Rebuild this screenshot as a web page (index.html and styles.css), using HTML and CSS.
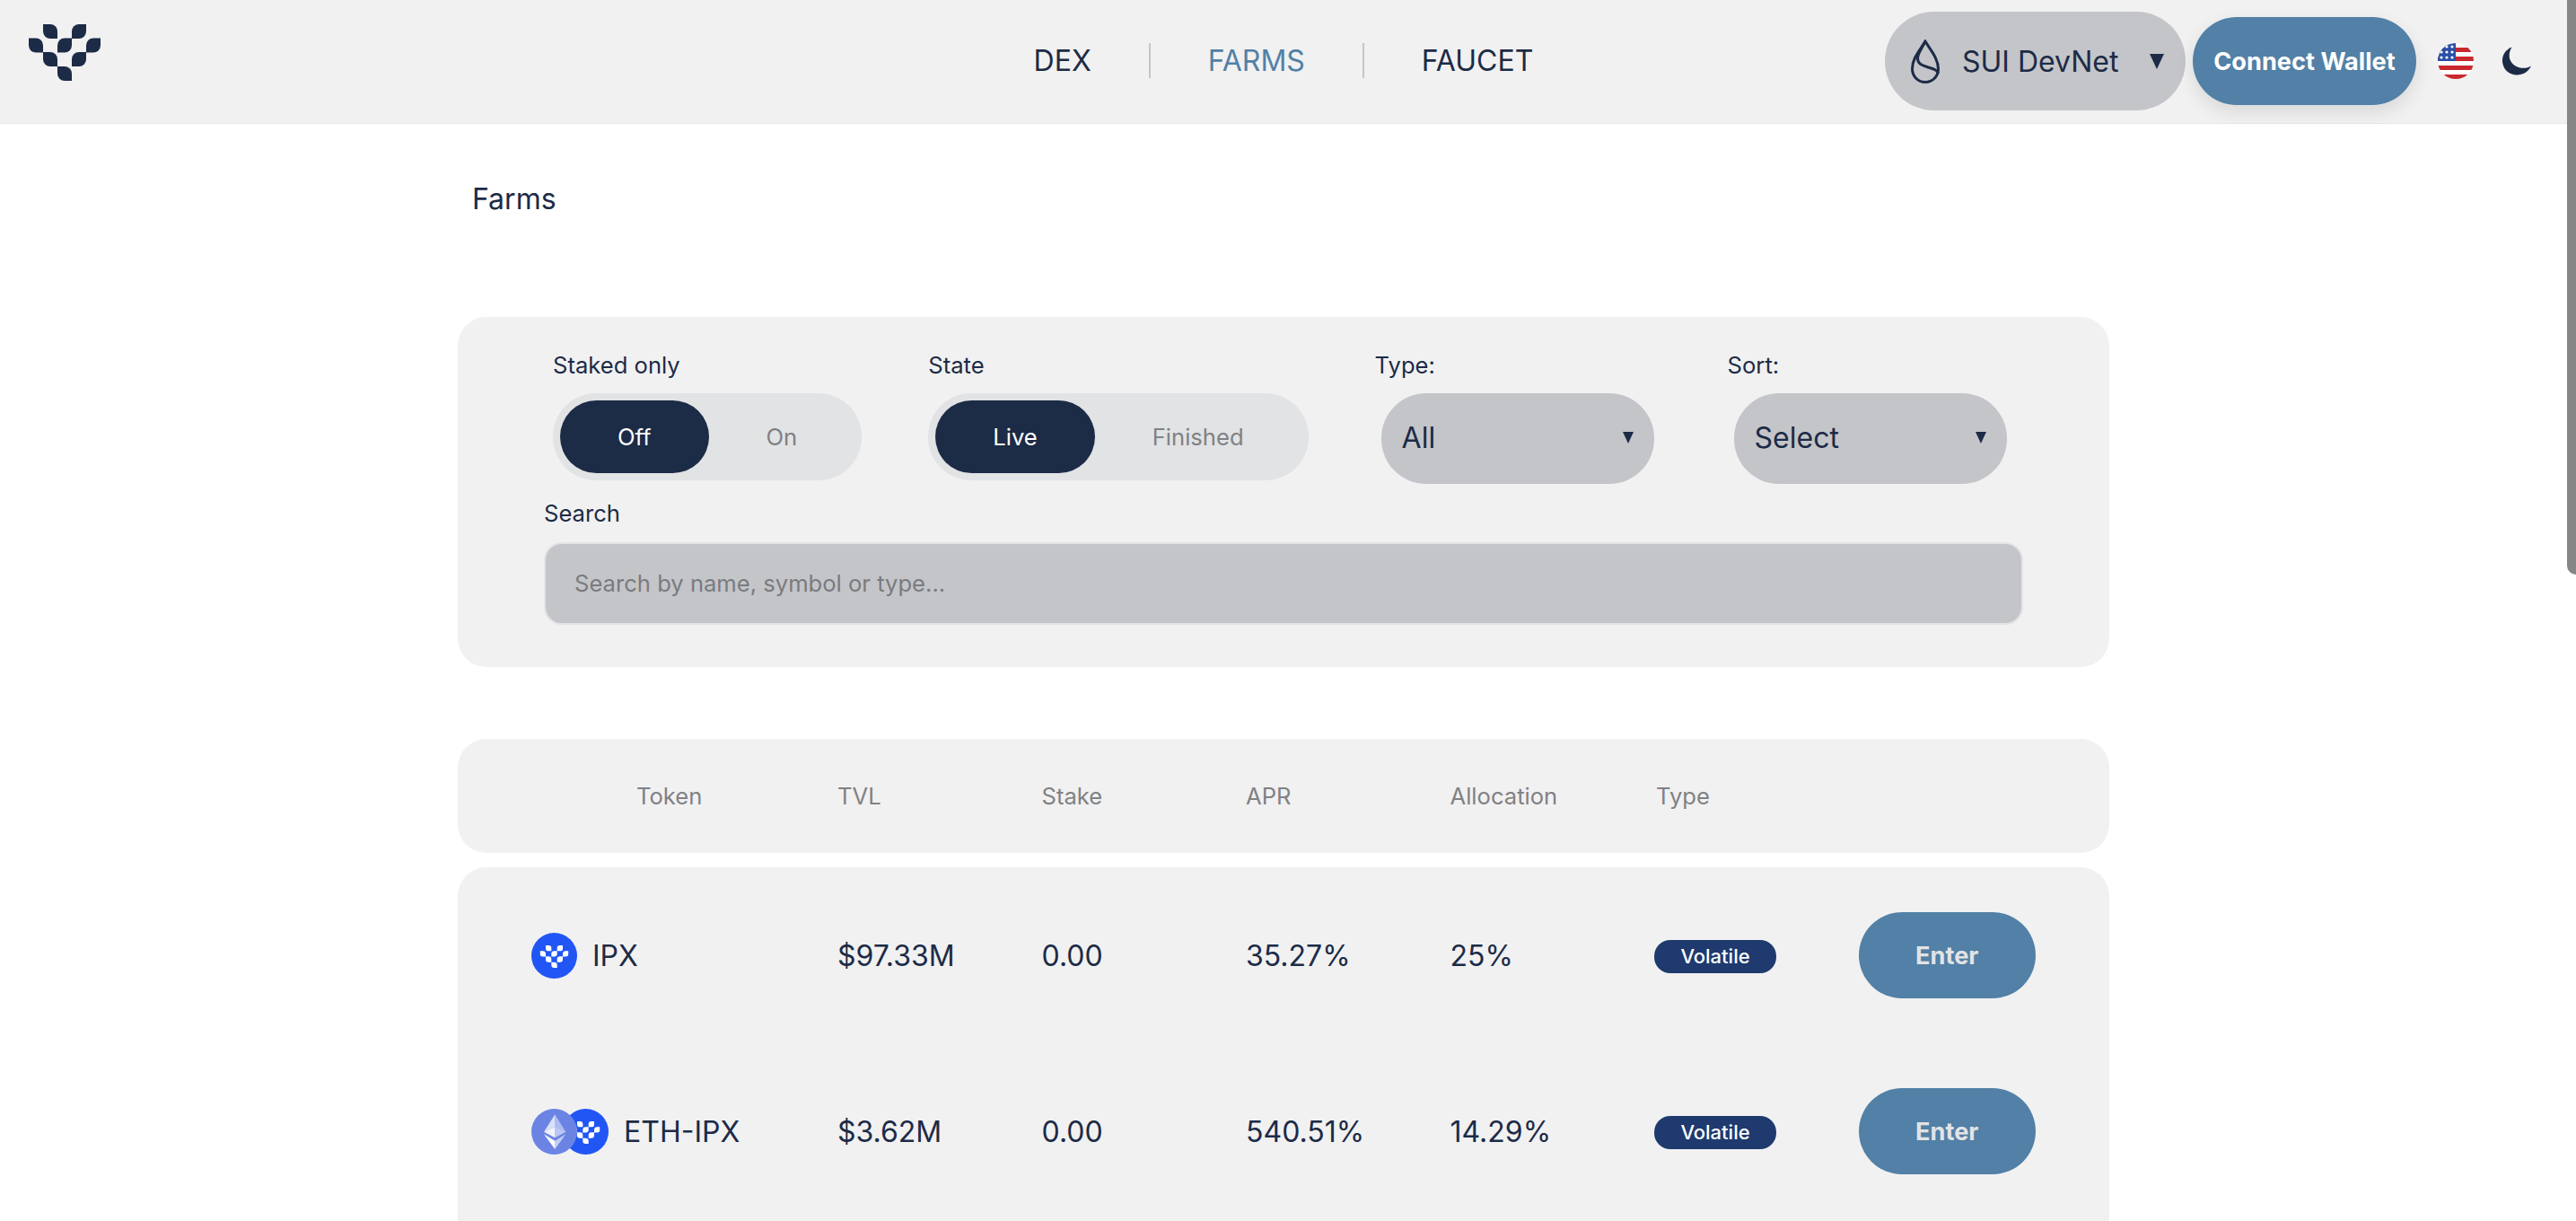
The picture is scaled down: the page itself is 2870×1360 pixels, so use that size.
FILE: index.html
```html
<!DOCTYPE html>
<html lang="en">
<head>
    <meta charset="UTF-8">
    <title>Farms</title>
    <link rel="stylesheet" href="styles.css">
</head>
<body>
<svg class="defs" width="0" height="0">
    <symbol id="logo" viewBox="0 0 80 63">
        <path d="M16 0H24A8 8 0 0 1 32 8V16H24A8 8 0 0 1 16 8Z"/>
        <path d="M64 0V8A8 8 0 0 1 56 16H48V8A8 8 0 0 1 56 0Z"/>
        <path d="M0 15.500H8A8 8 0 0 1 16 23.500V31.500H8A8 8 0 0 1 0 23.500Z"/>
        <path d="M48 15.500V23.500A8 8 0 0 1 40 31.500H32V23.500A8 8 0 0 1 40 15.500Z"/>
        <path d="M80 15.500V23.500A8 8 0 0 1 72 31.500H64V23.500A8 8 0 0 1 72 15.500Z"/>
        <path d="M16 31H24A8 8 0 0 1 32 39V47H24A8 8 0 0 1 16 39Z"/>
        <path d="M64 31V39A8 8 0 0 1 56 47H48V39A8 8 0 0 1 56 31Z"/>
        <path d="M32 47H40A8 8 0 0 1 48 55V63H40A8 8 0 0 1 32 55Z"/>
    </symbol>
    <symbol id="ipx" viewBox="0 0 51 51">
        <circle cx="25.500" cy="25.500" r="25.500" fill="#2156f5"/>
        <use href="#logo" x="9.500" y="14" width="32" height="25" fill="#fff"/>
    </symbol>
    <symbol id="eth" viewBox="0 0 51 51">
        <circle cx="25.500" cy="25.500" r="25.500" fill="#6b84e4"/>
        <path d="M26.300 6.300L14 25.700L26.300 20Z" fill="#fff" opacity=".75"/>
        <path d="M26.300 6.300L38.300 25.700L26.300 20Z" fill="#fff" opacity=".45"/>
        <path d="M14 25.700L26.300 20V32.300Z" fill="#fff" opacity=".9"/>
        <path d="M38.300 25.700L26.300 20V32.300Z" fill="#fff" opacity=".55"/>
        <path d="M14 28.300L26.300 35.700V45Z" fill="#fff"/>
        <path d="M38.300 28.300L26.300 35.700V45Z" fill="#fff" opacity=".6"/>
    </symbol>
</svg>

<header class="topbar">
    <svg class="logo"><use href="#logo"/></svg>
    <nav class="nav">
        <a class="nav-link">DEX</a>
        <a class="nav-link active">FARMS</a>
        <a class="nav-link">FAUCET</a>
    </nav>
    <div class="actions">
        <div class="network">
            <svg class="sui" viewBox="0 0 32 49" fill="none" stroke="currentColor" stroke-width="3">
                <path d="M16 2C10 12 1.500 21 1.500 32.500C1.500 41 8 47.500 16 47.500C24 47.500 30.500 41 30.500 33C30.500 21 22 12 16 2Z"/>
                <path d="M16 2C13 9 7.500 15 7.500 21C7.500 27 12 28.500 18 30.500C24 32.500 29 33 30.500 38"/>
            </svg>
            <span>SUI DevNet</span>
            <i class="caret caret-lg"></i>
        </div>
        <button class="connect">Connect Wallet</button>
        <svg class="flag" viewBox="0 0 40 40">
            <clipPath id="flag-clip"><circle cx="20" cy="20" r="20"/></clipPath>
            <g clip-path="url(#flag-clip)">
                <rect width="40" height="40" fill="#fff"/>
                <rect y="5" width="40" height="5" fill="#c9282e"/>
                <rect y="15" width="40" height="5" fill="#c9282e"/>
                <rect y="25" width="40" height="5" fill="#c9282e"/>
                <rect y="35" width="40" height="5" fill="#c9282e"/>
                <rect width="20" height="20" fill="#2a4fa8"/>
                <g fill="#fff">
                    <circle cx="16" cy="4" r="1.600"/>
                    <circle cx="10" cy="4" r="1.600"/>
                    <circle cx="16" cy="10" r="1.600"/>
                    <circle cx="10" cy="10" r="1.600"/>
                    <circle cx="4" cy="10" r="1.600"/>
                    <circle cx="16" cy="16" r="1.600"/>
                    <circle cx="10" cy="16" r="1.600"/>
                    <circle cx="4" cy="16" r="1.600"/>
                </g>
            </g>
        </svg>
        <svg class="moon" viewBox="0 0 32 32">
            <path d="M10.500 0.500C7 6 6.500 13 10.500 18C15 23.500 25 26 32 21.500C29 28 23 31.500 16 31.500C7 31.500 0 24.500 0 15.500C0 8.500 4 3 10.500 0.500Z"/>
        </svg>
    </div>
</header>

<main class="page">
    <h1 class="title">Farms</h1>

    <section class="panel filters">
        <div class="filter-row">
            <div class="field">
                <label>Staked only</label>
                <div class="toggle">
                    <span class="on">Off</span>
                    <span>On</span>
                </div>
            </div>
            <div class="field">
                <label>State</label>
                <div class="toggle">
                    <span class="on">Live</span>
                    <span>Finished</span>
                </div>
            </div>
            <div class="field field-select">
                <label>Type:</label>
                <div class="select">All<i class="caret"></i></div>
            </div>
            <div class="field field-select field-sort">
                <label>Sort:</label>
                <div class="select">Select<i class="caret"></i></div>
            </div>
        </div>
        <div class="search">
            <label>Search</label>
            <input type="text" placeholder="Search by name, symbol or type...">
        </div>
    </section>

    <section class="panel table-head">
        <div class="cols">
            <span class="head-token">Token</span>
            <span>TVL</span>
            <span>Stake</span>
            <span>APR</span>
            <span>Allocation</span>
            <span class="head-type">Type</span>
        </div>
    </section>

    <section class="panel table-body">
        <div class="cols row">
            <div class="token">
                <svg class="coin"><use href="#ipx"/></svg>
                <span>IPX</span>
            </div>
            <span>$97.33M</span>
            <span>0.00</span>
            <span>35.27%</span>
            <span>25%</span>
            <span><b class="badge">Volatile</b></span>
            <button class="enter">Enter</button>
        </div>
        <div class="cols row">
            <div class="token">
                <div class="pair">
                    <svg class="coin"><use href="#eth"/></svg>
                    <svg class="coin coin-back"><use href="#ipx"/></svg>
                </div>
                <span>ETH-IPX</span>
            </div>
            <span>$3.62M</span>
            <span>0.00</span>
            <span>540.51%</span>
            <span>14.29%</span>
            <span><b class="badge">Volatile</b></span>
            <button class="enter">Enter</button>
        </div>
    </section>
</main>

<div class="scrollbar"><div class="thumb"></div></div>
</body>
</html>
```

FILE: styles.css
```css
*{
    margin: 0;
    padding: 0;
    box-sizing: border-box;
}
html,body{
    height: 100%;
    overflow: hidden;
}
body{
    background: #fff;
    color: #1c2b46;
    font-family: Inter, "Liberation Sans", sans-serif;
    font-size: 25.600px;
    padding-right: 10px;
}
.defs{
    position: absolute;
}

/* top bar */
.topbar{
    height: 138px;
    background: #f1f1f1;
    border-bottom: 1px solid #e8e8e8;
    display: grid;
    grid-template-columns: 1fr auto 1fr;
    align-items: center;
    padding: 0 40px 1px;
}
.logo{
    width: 80px;
    height: 63px;
    margin: 27px 0 0 -8px;
    align-self: start;
    fill: #1c2b46;
}
.nav{
    display: flex;
    margin-top: -1px;
}
.nav-link{
    font-size: 32px;
    line-height: 39px;
    padding: 0 64px;
    border-left: 2px solid #c4c5c9;
}
.nav-link:first-child{
    border-left: none;
}
.nav-link.active{
    color: #5280a6;
}
.actions{
    display: flex;
    align-items: center;
    justify-content: flex-end;
}
.network{
    width: 335px;
    height: 110px;
    border-radius: 55px;
    background: #c4c5c9;
    display: flex;
    align-items: center;
    padding: 0 24px 0 29px;
    font-size: 32px;
}
.sui{
    width: 32px;
    height: 49px;
    margin-right: 25px;
}
.caret{
    margin-left: auto;
    width: 0;
    height: 0;
    border-left: 6.500px solid transparent;
    border-right: 6.500px solid transparent;
    border-top: 13px solid #1c2b46;
}
.caret-lg{
    border-left-width: 8.500px;
    border-right-width: 8.500px;
    border-top-width: 17px;
}
.connect{
    width: 249px;
    height: 98px;
    margin-left: 8px;
    border: none;
    border-radius: 49px;
    background: #5280a6;
    color: #fff;
    font-family: inherit;
    font-size: 27.200px;
    font-weight: 700;
    box-shadow: 0 8px 20px rgba(0,0,0,.1);
}
.flag{
    width: 40px;
    height: 40px;
    margin-left: 24px;
}
.moon{
    width: 32px;
    height: 32px;
    margin-left: 32px;
    fill: #1c2b46;
}

/* page */
.page{
    width: 1840px;
    margin: 0 auto;
}
.title{
    font-size: 32px;
    font-weight: 400;
    line-height: 40px;
    padding: 64px 0 111px 16px;
}
.panel{
    background: #f1f1f1;
    border-radius: 32px;
}
.filters{
    padding: 37px 96px 47px;
    margin-bottom: 80px;
}
.filter-row{
    display: flex;
    align-items: flex-start;
    gap: 74px;
    padding-left: 10px;
}
.field label,
.search label{
    display: block;
    line-height: 34px;
    margin-bottom: 14px;
}
.toggle{
    display: flex;
    height: 97px;
    padding: 8px;
    border-radius: 48px;
    background: #e2e3e5;
    color: #808184;
}
.toggle span{
    display: flex;
    align-items: center;
    padding: 0 64px;
    border-radius: 41px;
}
.toggle .on{
    background: #1c2b46;
    color: #fff;
}
.field-select .select{
    margin-left: 7px;
}
.field-sort{
    margin-left: 8px;
}
.select{
    width: 304px;
    height: 101px;
    border-radius: 50px;
    background: #c4c5c9;
    display: flex;
    align-items: center;
    padding: 0 23px 2px;
    font-size: 32px;
}
.search{
    margin-top: 16px;
}
.search label{
    margin-bottom: 15px;
}
.search input{
    display: block;
    width: 1648px;
    height: 92px;
    padding: 0 32px 2px;
    border: 2px solid #e2e3e5;
    border-radius: 20px;
    background: #c4c5c9;
    color: #1c2b46;
    font-family: inherit;
    font-size: 25.600px;
}
.search input::placeholder{
    color: #7a7b7e;
    opacity: 1;
}

/* table */
.cols{
    display: grid;
    grid-template-columns: 341px repeat(5, 227.500px) 1fr;
    align-items: center;
    padding: 0 82px;
}
.table-head{
    height: 127px;
    display: flex;
    align-items: center;
    margin-bottom: 16px;
    color: #808184;
}
.table-head .cols{
    width: 100%;
}
.head-token{
    padding-left: 117px;
}
.head-type{
    padding-left: 2px;
}
.table-body{
    padding-bottom: 32px;
}
.row{
    height: 196px;
    font-size: 32px;
}
.token{
    display: flex;
    align-items: center;
    gap: 17px;
}
.coin{
    display: block;
    width: 51px;
    height: 51px;
}
.pair{
    display: flex;
    position: relative;
    z-index: 0;
}
.coin-back{
    margin-left: -16px;
    position: relative;
    z-index: -1;
}
.badge{
    display: inline-block;
    width: 136px;
    height: 37px;
    line-height: 37px;
    border-radius: 18px;
    background: #1f3a6e;
    color: #fff;
    font-size: 22px;
    font-weight: 500;
    text-align: center;
    vertical-align: middle;
}
.enter{
    height: 96px;
    border: none;
    border-radius: 48px;
    background: #5280a6;
    color: #e2e3e5;
    font-family: inherit;
    font-size: 27.200px;
    font-weight: 700;
}
.scrollbar{
    position: fixed;
    top: 0;
    right: 0;
    bottom: 0;
    width: 10px;
    background: #fff;
}
.thumb{
    height: 640px;
    background: #868686;
    border-radius: 0 0 0 10px;
}
```
